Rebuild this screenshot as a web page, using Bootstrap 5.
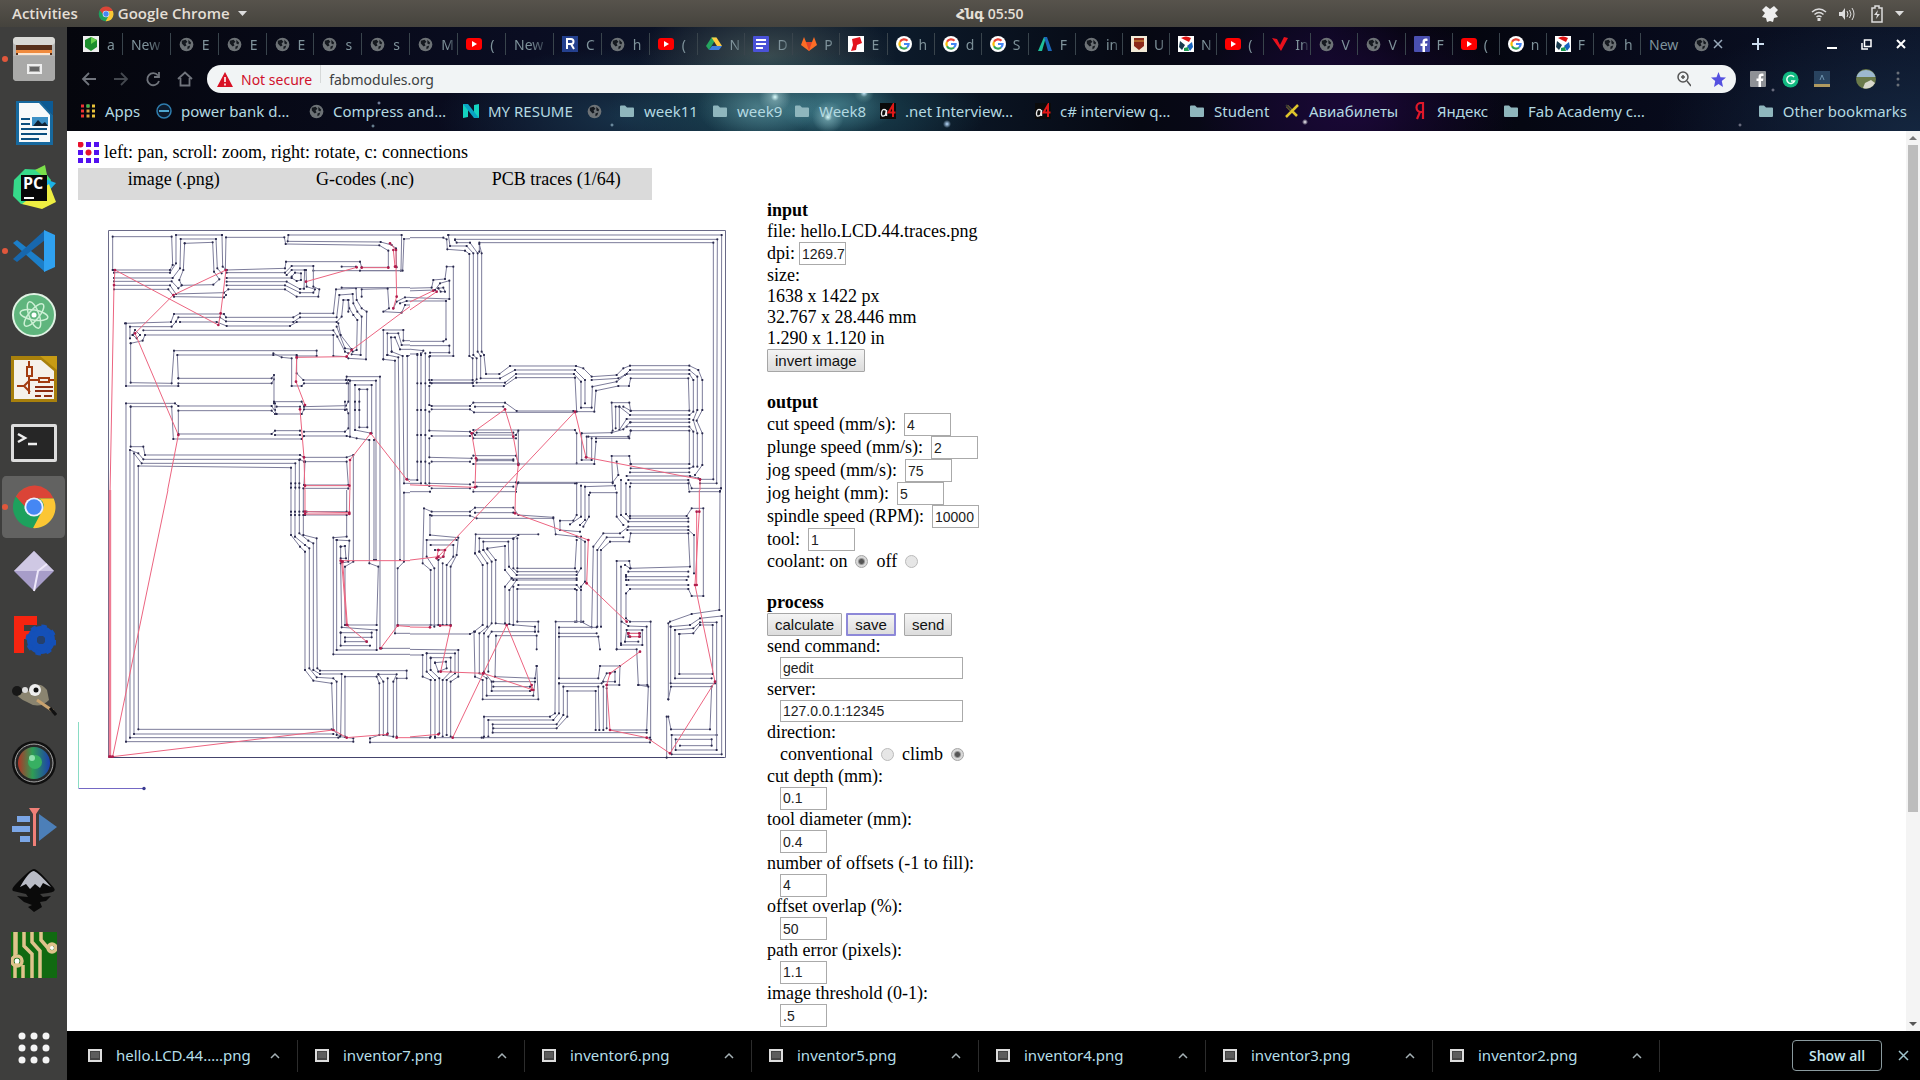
<!DOCTYPE html>
<html lang="en">
<head>
<meta charset="utf-8">
<meta name="viewport" content="width=device-width, initial-scale=1">
<title>fabmodules.org</title>
<link href="https://cdn.jsdelivr.net/npm/bootstrap@5.3.0/dist/css/bootstrap.min.css" rel="stylesheet">
<style>
  :root { --ui: "Noto Sans", "Open Sans", "DejaVu Sans", sans-serif; --page: "Liberation Serif", serif; }
  body { font-family: var(--ui); background: #000; color: #000; overflow: hidden; }
  a { text-decoration: none; color: inherit; }
  svg { display: block; flex: none; }
  .topbar { height: 27px; background: linear-gradient(#57534c, #45433d); color: #e4dfd6; font: 600 15px/27px "Open Sans", "DejaVu Sans", sans-serif; }
  .topbar button, .plain { background: none; border: 0; padding: 0; color: inherit; font: inherit; }
  .topbar time { font-size: 14px; }
  .topbar .side { flex: 954 1 0; }
  .topbar .side-end { flex-grow: 886; }
  .dock { width: 67px; background: #3e3e3d; flex: none; }
  .dock button { width: 67px; height: 64px; background: none; border: 0; padding: 0; display: flex; align-items: center; justify-content: center; position: relative; }
  .dock .running::before { content: ""; position: absolute; left: 2px; width: 6px; height: 6px; border-radius: 50%; background: #e0573c; }
  .dock .current { background: #626261 content-box; padding: 1px 2px; border-radius: 6px; }
  .chrome-top { color: #a9cdd6;
    background:
      radial-gradient(circle at 708px 70px, #dff 0, #8bb5bb99 4px, transparent 16px),
      radial-gradient(circle at 761px 90px, #dff 0, #7fb0b899 4px, transparent 16px),
      radial-gradient(circle at 797px 66px, #cef 0, #7aa6 4px, transparent 10px),
      radial-gradient(circle at 880px 97px, #bdf 0, transparent 4px),
      radial-gradient(circle at 312px 76px, #abd 0, transparent 2px),
      radial-gradient(circle at 306px 99px, #9bc 0, transparent 2px),
      radial-gradient(circle at 545px 98px, #9bc 0, transparent 2px),
      radial-gradient(circle at 1238px 95px, #fff 0, transparent 3px),
      radial-gradient(circle at 1673px 98px, #99a 0, transparent 2px),
      radial-gradient(circle at 1706px 63px, #99a 0, transparent 2px),
      radial-gradient(ellipse 60px 34px at 690px 80px, #5b8f98aa 0, transparent 100%),
      radial-gradient(ellipse 60px 30px at 770px 78px, #4c8894aa 0, transparent 100%),
      radial-gradient(ellipse 190px 60px at 730px 84px, #2a6070 0, #1b4654aa 45%, transparent 100%),
      radial-gradient(ellipse 130px 60px at 700px 30px, #3c4c50 0, transparent 100%),
      radial-gradient(ellipse 190px 70px at 560px 90px, #173148 0, transparent 100%),
      radial-gradient(ellipse 160px 110px at 1290px 80px, #1b0838 0, transparent 100%),
      radial-gradient(ellipse 260px 120px at 1853px 104px, #14263f 0, transparent 100%),
      linear-gradient(90deg, #05060d 0, #0a0d22 25%, #0c1a2a 45%, #060812 58%, #0c0820 68%, #03040a 72%, #070a1a 85%, #0c1428 100%); }
  .tabs { height: 38px; padding: 0 6px 4px 8px; font-size: 14px; color: #7f939b; }
  .tabs .tab { height: 22px; flex: 48 1 0; min-width: 0; overflow: hidden; display: flex; align-items: center; gap: 8px; padding-left: 8px; border-right: 1px solid #39444c; white-space: nowrap; }
  .tabs .tab.slim { flex-grow: 47; gap: 7px; }
  .tabs .tab span { overflow: hidden; flex: 1; padding-right: 3px; -webkit-mask-image: linear-gradient(90deg, #000 40%, transparent); }
  .tabs-end { width: 273px; flex: none; }
  .tabs-end button { height: 32px; }
  .toolbar { height: 28px; padding: 0 6px; color: #70747c; }
  .toolbar .tool { width: 32px; height: 28px; display: flex; align-items: center; justify-content: center; }
  .omnibox { height: 28px; border-radius: 14px; background: #f1f4f5; font-size: 14px; margin: 0 6px; padding: 0 10px; color: #d0112b; }
  .omnibox input { border: 0; background: none; color: #3c3f42; outline: 0; padding: 0; min-width: 0; }
  .omnibox .vr { height: 18px; color: #888; }
  .bookmarks { height: 38px; font-size: 15px; display: grid; padding: 0 13px 2px; align-items: center;
    grid-template-columns: 76px 153px 154px 124px 32px 93px 82px 86px 155px 154px 96px 127px 91px 1fr auto; }
  .bookmarks a { display: flex; align-items: center; gap: 9px; white-space: nowrap; color: #b3d9e1; }
  .viewport { background: #fff; font: 18px/21px var(--page); overflow: hidden; }
  .page { padding: 11px 0 0 11px; min-width: 0; overflow: hidden; }
  .page-head { height: 26px; gap: 5px; }
  .formats { width: 574px; height: 32px; background: #dadada; line-height: 22px; }
  .formats a { flex: 1 1 0; text-align: center; }
  .board { width: 689px; }
  .panel b { display: block; height: 21px; }
  .line { height: 21px; display: flex; align-items: center; gap: 8px; white-space: nowrap; }
  .line.entry { height: 23px; }
  .line.inset { padding-left: 13px; }
  .line.low { height: 22px; }
  .panel form > .gap-line { height: 20px; }
  .panel input[type=text] { width: 47px; height: 23px; border: 1px solid #aaa; padding: 0 0 0 2px; font: 14px/18px "Liberation Sans", sans-serif; color: #222; border-radius: 0; }
  .panel input[type=text].wide { width: 183px; height: 22px; }
  .panel button { height: 23px; border: 1px solid #a6a6a6; border-radius: 1px; background: linear-gradient(#f4f4f4, #dcdcdc); font: 15px/19px "Liberation Sans", sans-serif; padding: 0 7px; color: #111; }
  .panel button.focused { border: 2px solid #8d88d8; padding: 0 7px; }
  .panel input[type=radio] { appearance: none; width: 13px; height: 13px; margin: 0; border: 1px solid #bbb; border-radius: 50%; background: #e6e6e6; }
  .panel input[type=radio]:checked { background: radial-gradient(circle, #555 0 2px, #d8d8d8 4px); border-color: #a4a4a4; }
  .scroll { width: 14px; background: #f4f4f4; flex: none; }
  .scroll .thumb { width: 10px; flex: 667 1 0; background: #bdbdbd; }
  .scroll .rest { flex: 205 1 0; }
  .scroll svg { margin: 4px 0; }
  .downloads { height: 49px; background: #000; color: #b5dfe8; font-size: 15px; padding-left: 4px; padding-right: 11px; }
  .downloads .item { flex: 0 1 227px; height: 32px; border-right: 1px solid #2c2c2c; padding: 0 17px 0 16px; gap: 13px; white-space: nowrap; }
  .show-all { width: 90px; height: 31px; border: 1px solid #8a9a9e; border-radius: 4px; background: #000; color: #c4e8f0; font: 600 14px "Open Sans", sans-serif; }
  .board path { fill: none; stroke-width: 1; vector-effect: non-scaling-stroke; }
  .cut path { stroke: #7c7c9a; marker-start: url(#node); marker-mid: url(#node); marker-end: url(#node); }
  .jog path { stroke: #ec6480; marker-start: url(#hop); marker-mid: url(#hop); marker-end: url(#hop); }
</style>
<script src="https://cdn.jsdelivr.net/npm/bootstrap@5.3.0/dist/js/bootstrap.bundle.min.js"></script>
</head>
<body class="vh-100 d-flex flex-column">

<svg width="0" height="0" class="position-absolute" aria-hidden="true">
  <symbol id="globe" viewBox="0 0 16 16"><circle cx="8" cy="8" r="7.3" fill="#6d7276"/><path d="M3 4l4-1 2 2-2 2 1 2-2 1-3-3zM10 3l3 3-1 2-2-1zM9 10l3-1-1 3-2 1z" fill="#15191f"/></symbol>
  <symbol id="yt" viewBox="0 0 16 16"><rect y="2" width="16" height="12" rx="3" fill="#f00"/><path d="M6 5l5 3-5 3z" fill="#fff"/></symbol>
  <symbol id="goog" viewBox="0 0 16 16"><circle cx="8" cy="8" r="8" fill="#fff"/><g fill="none" stroke-width="2.2"><path d="M11.5 4.8A4.6 4.6 0 0 0 4 5.8" stroke="#ea4335"/><path d="M4 5.8a4.6 4.6 0 0 0 0 4.4" stroke="#fbbc05"/><path d="M4 10.2a4.6 4.6 0 0 0 7 1.3" stroke="#34a853"/><path d="M8 8h4.6a4.6 4.6 0 0 1-1.6 3.5" stroke="#4285f4"/></g></symbol>
  <symbol id="folder" viewBox="0 0 16 16"><path d="M1 3.500a1 1 0 0 1 1-1h4l2 2h6a1 1 0 0 1 1 1V13a1 1 0 0 1-1 1H2a1 1 0 0 1-1-1z" fill="#8fb6bd"/></symbol>
  <symbol id="fb" viewBox="0 0 16 16"><rect width="16" height="16" rx="1" fill="currentColor"/><path d="M11 16V10h2l.4-2.500H11V6.200c0-.8.4-1.200 1.300-1.200h1.200V2.800C11 2.300 8.500 2.500 8.500 6v1.500h-2V10h2v6z" fill="#fff"/></symbol>
  <symbol id="mix" viewBox="0 0 16 16"><rect width="16" height="16" fill="#fff"/><path d="M3 2q5-3 10 0l-2 4-4-2z" fill="#d11"/><path d="M2 5l5 4-3 5-3-3z" fill="#173a4e"/><path d="M14 6l-5 4 3 5 3-4z" fill="#1764c0"/><path d="M6 12l4-1 1 4H6z" fill="#1a9a50"/></symbol>
  <symbol id="a4" viewBox="0 0 16 16"><rect width="16" height="16" fill="#0b0b0b"/><path d="M6 7Q2 5 1.500 10t4 2l1-5v6" stroke="#eee" stroke-width="1.400" fill="none"/><path d="M13 14V2L8.500 9.500H15.500" stroke="#e01818" stroke-width="2" fill="none"/></symbol>
  <symbol id="thumb" viewBox="0 0 16 16"><rect x="1" y="1" width="14" height="13" fill="#ddd"/><rect x="3" y="3" width="10" height="9" fill="#444"/><path d="M4 5h8M4 7h8M4 9h8" stroke="#777"/></symbol>
  <symbol id="up" viewBox="0 0 10 10"><path d="M1 7l4-4 4 4" fill="none" stroke="#a5b1b5" stroke-width="1.500"/></symbol>
  <symbol id="chrome" viewBox="0 0 48 48"><circle cx="24" cy="24" r="22" fill="#1da15d"/><path d="M5 13A22 22 0 0 1 44.500 15H24a9 9 0 0 0-9 9z" fill="#db4437"/><path d="M44.500 15A22 22 0 0 1 23 46l9-17a9 9 0 0 0-3-14z" fill="#fbc634"/><circle cx="24" cy="24" r="10" fill="#eef"/><circle cx="24" cy="24" r="8" fill="#4587f4"/></symbol>
</svg>

<header class="topbar d-flex align-items-center px-0">
  <div class="side d-flex align-items-center ps-2">
    <button class="ms-1">Activities</button>
    <button class="d-flex align-items-center ms-3 ps-1 gap-1"><svg width="16" height="16"><use href="#chrome"/></svg><span>Google Chrome</span><svg width="10" height="6" class="ms-1"><path d="M0 0h9l-4.500 5z" fill="#ddd"/></svg></button>
  </div>
  <time>Հնգ 05:50</time>
  <div class="side side-end d-flex align-items-center justify-content-end pe-3">
    <svg width="18" height="18" class="me-3" viewBox="0 0 18 18"><path d="M5 1l4 3 4-3 4 4-3 3 3 4-4 1-1 4-3-1-3 1-1-4-4-1 3-4-3-3z" fill="#eee"/></svg>
    <svg width="16" height="16" class="ms-3 me-2" viewBox="0 0 16 16" fill="none" stroke="#ddd" stroke-width="1.500"><path d="M1 6q7-6 14 0M3.500 8.500q4.500-4 9 0M5.500 11q2.500-2 5 0"/><path d="M8 12v3" stroke-width="3"/></svg>
    <svg width="16" height="14" class="ms-1 me-2" viewBox="0 0 16 14"><path d="M0 5h3l3-4v12l-3-4H0z" fill="#ddd"/><path d="M8 4q2 3 0 6M10.500 3q3 4 0 8M13 1q4 6 0 12" fill="none" stroke="#ddd"/></svg>
    <svg width="12" height="18" class="ms-2 me-2" viewBox="0 0 12 18"><path d="M4 1h4v2h3v14H1V3h3z" fill="none" stroke="#ddd" stroke-width="1.500"/><path d="M7 5l-4 5h3l-1 4 4-5H6z" fill="#ddd"/></svg>
    <svg width="9" height="6" class="ms-1"><path d="M0 0h9l-4.500 5z" fill="#ddd"/></svg>
  </div>
</header>

<div class="d-flex flex-grow-1" style="min-height:0">
  <nav class="dock d-flex flex-column" aria-label="Dock">
    <button class="running" aria-label="Files"><svg width="44" height="46" viewBox="0 0 44 46"><rect x="1" y="1" width="42" height="44" rx="4" fill="#b4b4b2"/><rect x="1" y="1" width="42" height="8" rx="4" fill="#d9d9d6"/><rect x="4" y="9" width="36" height="10" fill="#57301c"/><path d="M4 14h36v3H4z" fill="#f08a3c"/><path d="M6 17h32v2H6z" fill="#fbe5d0"/><path d="M1 20h42v21a4 4 0 0 1-4 4H5a4 4 0 0 1-4-4z" fill="#a9a9a8"/><rect x="16" y="29" width="13" height="8" fill="none" stroke="#eee" stroke-width="2"/><rect x="18" y="31" width="9" height="4" fill="#666"/></svg></button>
    <button aria-label="Writer"><svg width="40" height="46" viewBox="0 0 40 46"><path d="M2 1h24l13 14v30H2z" fill="#17699f"/><path d="M5 3h20l11 12v27H5z" fill="#f7f9fa"/><path d="M26 1h13v14z" fill="#0c5a94"/><path d="M7 19h9M7 24h9M7 29h26M7 34h26M7 39h18" stroke="#0b4f80" stroke-width="2"/><rect x="18" y="17" width="16" height="9" fill="#3c90c6"/><path d="M19 26l5-6 4 4 3-2 3 4z" fill="#123"/></svg></button>
    <button aria-label="PyCharm"><svg width="46" height="46" viewBox="0 0 46 46"><path d="M3 16L14 5l18 1 8 10-8 26-22-2-8-8z" fill="#36d98a"/><path d="M24 6l10-5 3 15z" fill="#7be04a"/><path d="M34 15l11 4-8 9z" fill="#1bb3e6"/><path d="M38 20l7 18-14 7-20-5z" fill="#eeee42"/><rect x="10" y="11" width="26" height="26" fill="#080808"/><path d="M13 34h10" stroke="#fff" stroke-width="2"/><text x="12" y="25" font-family="Open Sans, sans-serif" font-size="16" font-weight="700" fill="#fff">PC</text></svg></button>
    <button class="running" aria-label="Visual Studio Code"><svg width="44" height="44" viewBox="0 0 44 44"><path d="M1 14l4-3 28 22v10z" fill="#1c7fc9"/><path d="M1 30l4 3L33 11V1z" fill="#1767ad"/><path d="M32 1l11 5v32l-11 5z" fill="#2fa1f0"/></svg></button>
    <button aria-label="Atom"><svg width="44" height="44" viewBox="0 0 44 44"><circle cx="22" cy="22" r="21" fill="#5fb57d" stroke="#dff2e3" stroke-width="2"/><g fill="none" stroke="#cdf0d5" stroke-width="1.500"><ellipse cx="22" cy="22" rx="14" ry="5" transform="rotate(10 22 22)"/><ellipse cx="22" cy="22" rx="14" ry="5" transform="rotate(70 22 22)"/><ellipse cx="22" cy="22" rx="14" ry="5" transform="rotate(130 22 22)"/></g><circle cx="22" cy="22" r="2.500" fill="#fff"/></svg></button>
    <button aria-label="Eeschema"><svg width="48" height="48" viewBox="0 0 48 48"><path d="M1 1h33l13 13v33H1z" fill="#a8800c"/><path d="M4 5h27l13 11v28H4z" fill="#f5f1ea"/><path d="M30 1h17v14z" fill="#c79b14"/><g fill="none" stroke="#a33c10" stroke-width="2"><path d="M19 6v6m0 8v5m0 0v14M7 31h8m4-5l-5 5 6 6M20 25h9m10 0h5"/><rect x="17" y="12" width="5" height="9"/><rect x="29" y="23" width="10" height="4"/></g><path d="M25 32h18M25 36h18M25 41h6M34 41h8" stroke="#8c2c10" stroke-width="2"/></svg></button>
    <button aria-label="Terminal"><svg width="46" height="38" viewBox="0 0 46 38"><rect width="46" height="38" rx="2" fill="#ddd"/><rect x="3" y="3" width="40" height="32" fill="#262626"/><path d="M7 10l7 4-7 4M17 20h9" fill="none" stroke="#eee" stroke-width="2.500"/></svg></button>
    <button class="running current" aria-label="Google Chrome"><svg width="46" height="46"><use href="#chrome"/></svg></button>
    <button aria-label="3D viewer"><svg width="42" height="42" viewBox="0 0 42 42"><path d="M21 1l20 20-20 20L1 21z" fill="#a79dc9"/><path d="M21 1l20 20H25L1 21z" fill="#cfc8e4"/><path d="M21 41l4-20 9-7" fill="none" stroke="#eee8fa" stroke-width="2"/></svg></button>
    <button aria-label="FreeCAD"><svg width="44" height="42" viewBox="0 0 44 42"><path d="M2 2h23v9H12v6h11v8H12v14H2z" fill="#f62410"/><g transform="translate(29 26)"><circle r="9" fill="none" stroke="#1450b8" stroke-width="10"/><circle r="13" fill="none" stroke="#1450b8" stroke-width="5" stroke-dasharray="5 5.200"/><circle r="4" fill="#24406e"/></g></svg></button>
    <button aria-label="GIMP"><svg width="46" height="34" viewBox="0 0 46 34"><path d="M3 8q8 6 17-1Q28-2 36 8l2 10q-10 10-22 2Q6 16 3 8z" fill="#8a8470"/><circle cx="6" cy="9" r="5" fill="#171717"/><circle cx="24" cy="8" r="6" fill="#eee"/><circle cx="25" cy="8" r="2.500" fill="#111"/><circle cx="14" cy="8" r="3" fill="#ddd"/><path d="M26 18l16 11" stroke="#c9a26e" stroke-width="3"/><path d="M39 26l6 7" stroke="#111" stroke-width="3"/></svg></button>
    <button aria-label="Camera"><svg width="46" height="46" viewBox="0 0 46 46"><defs><linearGradient id="lens"><stop stop-color="#b23427"/><stop offset=".45" stop-color="#2e9c55"/><stop offset="1" stop-color="#1c3fae"/></linearGradient></defs><circle cx="23" cy="23" r="22" fill="#101010"/><circle cx="23" cy="23" r="19" fill="#262626" stroke="#aaa"/><circle cx="23" cy="23" r="16" fill="url(#lens)"/><circle cx="24" cy="22" r="7" fill="#37b062"/><circle cx="21" cy="18" r="3" fill="#8fe0ad"/></svg></button>
    <button aria-label="Kdenlive"><svg width="46" height="40" viewBox="0 0 46 40"><path d="M6 9h13v6H6zM1 19h18v6H1zM9 29h10v6H9z" fill="#7ba6e6"/><path d="M28 7l18 13-18 14z" fill="#4c7fb8"/><path d="M18 1h11l-4 6v32h-3V7z" fill="#f08078"/></svg></button>
    <button aria-label="Inkscape"><svg width="46" height="46" viewBox="0 0 46 46"><path d="M23 1q4 0 20 19 3 4-6 5l-8 1 3 3 8-1-5 5-6 1 2 5-8 5-6-5 4-2-8-3-7-6 11 1-2-3L2 23q-2-2 2-6Q19 1 23 1z" fill="#0a0a0a"/><path d="M23 3q5 2 17 16l-8-4-3 5-5-4-5 5-4-5-6 3Q18 3 23 3z" fill="#b9bcc6"/></svg></button>
    <button aria-label="Pcbnew"><svg width="46" height="46" viewBox="0 0 46 46"><rect width="46" height="46" fill="#116a11"/><g fill="none" stroke="#dfc38c" stroke-width="3.500"><path d="M4 0v24M4 46V34l3-4M12 46V33M5 0v22M13 0v14l8 8v24M21 0v10l8 9v27M30 0v8l6 7h6"/><circle cx="6" cy="29" r="5"/><circle cx="41" cy="16" r="4"/></g><circle cx="6" cy="29" r="2.500" fill="#fff"/><circle cx="41" cy="16" r="2" fill="#fff"/></svg></button>
    <button class="mt-auto" aria-label="Show applications"><svg width="32" height="32" viewBox="0 0 32 32" fill="#f4f4f4"><circle cx="4" cy="4" r="3.500"/><circle cx="16" cy="4" r="3.500"/><circle cx="28" cy="4" r="3.500"/><circle cx="4" cy="16" r="3.500"/><circle cx="16" cy="16" r="3.500"/><circle cx="28" cy="16" r="3.500"/><circle cx="4" cy="28" r="3.500"/><circle cx="16" cy="28" r="3.500"/><circle cx="28" cy="28" r="3.500"/></svg></button>
  </nav>

  <div class="d-flex flex-column flex-grow-1" style="min-width:0">
    <div class="chrome-top">
      <div class="tabs d-flex align-items-center">
        <a href="#" class="tab"><svg width="16" height="16"><rect width="16" height="16" fill="#eee"/><path d="M8 1l6 3v7l-6 4-6-4V4z" fill="#1d8f2d"/><path d="M8 1l6 3-6 4z" fill="#6ad24e"/></svg><span>a</span></a>
        <a href="#" class="tab"><span>New</span></a>
        <a href="#" class="tab"><svg width="15" height="15"><use href="#globe"/></svg><span>E</span></a>
        <a href="#" class="tab"><svg width="15" height="15"><use href="#globe"/></svg><span>E</span></a>
        <a href="#" class="tab"><svg width="15" height="15"><use href="#globe"/></svg><span>E</span></a>
        <a href="#" class="tab"><svg width="15" height="15"><use href="#globe"/></svg><span>s</span></a>
        <a href="#" class="tab"><svg width="15" height="15"><use href="#globe"/></svg><span>s</span></a>
        <a href="#" class="tab"><svg width="15" height="15"><use href="#globe"/></svg><span>M</span></a>
        <a href="#" class="tab"><svg width="16" height="16"><use href="#yt"/></svg><span>(</span></a>
        <a href="#" class="tab"><span>New</span></a>
        <a href="#" class="tab"><svg width="16" height="16"><rect width="16" height="16" fill="#24408e"/><path d="M5 13V3h4a2.500 2.500 0 0 1 0 5H5m4 0l3 5" fill="none" stroke="#fff" stroke-width="2"/></svg><span>C</span></a>
        <a href="#" class="tab"><svg width="15" height="15"><use href="#globe"/></svg><span>h</span></a>
        <a href="#" class="tab"><svg width="16" height="16"><use href="#yt"/></svg><span>(</span></a>
        <a href="#" class="tab"><svg width="16" height="16"><path d="M5.500 1.500h5L8 6 3 14 0 10z" fill="#25a55f"/><path d="M5.500 1.500h5L16 10h-5z" fill="#fc4"/><path d="M3 14l3-4h10l-3 4z" fill="#3c7de0"/></svg><span>N</span></a>
        <a href="#" class="tab"><svg width="16" height="16"><rect width="16" height="16" rx="1" fill="#4a52d8"/><path d="M3 4h10M3 8h10M3 12h7" stroke="#fff" stroke-width="2"/></svg><span>D</span></a>
        <a href="#" class="tab slim"><svg width="16" height="16"><path d="M0 9L3 1l2 5h6l2-5 3 8-8 6z" fill="#fc6d26"/><path d="M5 6h6l-3 9z" fill="#e24329"/></svg><span>P</span></a>
        <a href="#" class="tab slim"><svg width="16" height="16"><rect width="16" height="16" fill="#fff"/><path d="M4 3l8-2 2 6-5 2-1 5-5 1 2-6z" fill="#e3131c"/></svg><span>E</span></a>
        <a href="#" class="tab slim"><svg width="16" height="16"><use href="#goog"/></svg><span>h</span></a>
        <a href="#" class="tab slim"><svg width="16" height="16"><use href="#goog"/></svg><span>d</span></a>
        <a href="#" class="tab slim"><svg width="16" height="16"><use href="#goog"/></svg><span>S</span></a>
        <a href="#" class="tab slim"><svg width="16" height="16"><path d="M1 15L7 1h2L5 15z" fill="#1fc09a"/><path d="M7 1h3l5 14h-4z" fill="#1b66b8"/></svg><span>F</span></a>
        <a href="#" class="tab slim"><svg width="15" height="15"><use href="#globe"/></svg><span>in</span></a>
        <a href="#" class="tab slim"><svg width="16" height="16"><rect width="16" height="16" fill="#f3ead6"/><path d="M3 2h10v8l-5 4-5-4z" fill="#8c2a1a"/><path d="M3 5h10" stroke="#d9a441"/></svg><span>U</span></a>
        <a href="#" class="tab slim"><svg width="16" height="16"><use href="#mix"/></svg><span>N</span></a>
        <a href="#" class="tab slim"><svg width="16" height="16"><use href="#yt"/></svg><span>(</span></a>
        <a href="#" class="tab slim"><svg width="16" height="16"><path d="M0 2l5 1 3 6 4-8 4 1-7 13z" fill="#e8101c"/></svg><span>In</span></a>
        <a href="#" class="tab slim"><svg width="15" height="15"><use href="#globe"/></svg><span>V</span></a>
        <a href="#" class="tab slim"><svg width="15" height="15"><use href="#globe"/></svg><span>V</span></a>
        <a href="#" class="tab slim"><svg width="16" height="16" color="#4a4fb0"><use href="#fb"/></svg><span>F</span></a>
        <a href="#" class="tab slim"><svg width="16" height="16"><use href="#yt"/></svg><span>(</span></a>
        <a href="#" class="tab slim"><svg width="16" height="16"><use href="#goog"/></svg><span>n</span></a>
        <a href="#" class="tab slim"><svg width="16" height="16"><use href="#mix"/></svg><span>F</span></a>
        <a href="#" class="tab slim"><svg width="15" height="15"><use href="#globe"/></svg><span>h</span></a>
        <div class="tabs-end d-flex align-items-center">
          <a href="#" class="ps-2 me-2">New</a>
          <svg width="15" height="15" class="ms-2"><use href="#globe"/></svg>
          <button class="plain ms-1" aria-label="Close tab"><svg width="10" height="10"><path d="M1 1l8 8M9 1L1 9" stroke="#9ab" stroke-width="1.500"/></svg></button>
          <button class="plain ms-4 ps-1" aria-label="New tab"><svg width="14" height="14"><path d="M7 1v12M1 7h12" stroke="#cde" stroke-width="2"/></svg></button>
          <div class="ms-auto d-flex align-items-center gap-4 pe-2">
            <button class="plain" aria-label="Minimize"><svg width="10" height="12"><path d="M0 10h10" stroke="#fff" stroke-width="2"/></svg></button>
            <button class="plain" aria-label="Restore"><svg width="11" height="11"><path d="M3.500 1h6.500v6.500H3.500zM1 4v6h6" fill="none" stroke="#fff" stroke-width="1.500"/></svg></button>
            <button class="plain" aria-label="Close"><svg width="10" height="10"><path d="M1 1l8 8M9 1L1 9" stroke="#fff" stroke-width="2"/></svg></button>
          </div>
        </div>
      </div>

      <div class="toolbar d-flex align-items-center">
        <button class="plain tool" aria-label="Back"><svg width="16" height="16" fill="none" stroke="currentColor" stroke-width="1.800"><path d="M15 8H2M8 2L2 8l6 6"/></svg></button>
        <button class="plain tool" aria-label="Forward"><svg width="16" height="16" fill="none" stroke="#44484f" stroke-width="1.800"><path d="M1 8h13M8 2l6 6-6 6"/></svg></button>
        <button class="plain tool" aria-label="Reload"><svg width="16" height="16" fill="none" stroke="currentColor" stroke-width="1.800"><path d="M13 4.500A6 6 0 1 0 14 10M14 1v5H9"/></svg></button>
        <button class="plain tool" aria-label="Home"><svg width="16" height="16" fill="none" stroke="currentColor" stroke-width="1.800"><path d="M1 8l7-6.500L15 8M3.500 7v7.500h9V7"/></svg></button>
        <div class="omnibox d-flex align-items-center flex-grow-1">
          <svg width="16" height="15" class="me-2"><path d="M8 0l8 15H0z" fill="#d81125"/><path d="M8 5v5M8 11.500v2" stroke="#fff" stroke-width="1.600"/></svg>
          <label for="url">Not secure</label><span class="vr mx-2"></span>
          <input id="url" type="text" class="flex-grow-1" value="fabmodules.org">
          <button class="plain me-3 pe-1" aria-label="Zoom"><svg width="14" height="16" fill="none" stroke="#555" stroke-width="1.500"><circle cx="6" cy="6" r="5"/><path d="M10 10l4 5M4 6h4M6 4v4"/></svg></button>
          <button class="plain" aria-label="Bookmark this page"><svg width="15" height="15"><path d="M7.500 0l2 5.200 5.500.3-4.200 3.500L12 15l-4.500-3L3 15l1.200-6L0 5.500l5.500-.3z" fill="#5450e0"/></svg></button>
        </div>
        <button class="plain tool" aria-label="Facebook"><svg width="16" height="16" color="#8e9196"><use href="#fb"/></svg></button>
        <button class="plain tool" aria-label="Grammarly"><svg width="17" height="17"><circle cx="8.500" cy="8.500" r="8" fill="#12b981"/><path d="M12 6a4 4 0 1 0 .5 4H9" fill="none" stroke="#eafff6" stroke-width="1.500"/></svg></button>
        <button class="plain tool me-2" aria-label="Extension"><svg width="16" height="16"><rect width="16" height="13" fill="#29435f"/><path d="M0 14.500h16" stroke="#b09a60" stroke-width="3"/><path d="M6 9l2-5 2 5" fill="none" stroke="#6d92ad"/></svg></button>
        <button class="plain tool ms-1" aria-label="Profile"><svg width="20" height="20"><circle cx="10" cy="10" r="10" fill="#6a7a4a"/><path d="M0.500 8A10 10 0 0 1 19.500 8z" fill="#9db9cf"/><path d="M9 14l6-3 4 3a10 10 0 0 1-12 5z" fill="#d8d8cc"/></svg></button>
        <button class="plain tool" aria-label="Menu"><svg width="4" height="16" fill="#6a7078"><circle cx="2" cy="2" r="1.500"/><circle cx="2" cy="8" r="1.500"/><circle cx="2" cy="14" r="1.500"/></svg></button>
      </div>

      <nav class="bookmarks">
        <a href="#"><svg width="16" height="16" viewBox="0 0 16 16"><path d="M1 3h3M1 8h3M1 13h3" stroke="#e33" stroke-width="3"/><path d="M6.500 3h3M6.500 8h3M6.500 13h3" stroke="#d9a03a" stroke-width="3"/><path d="M12 3h3M12 8h3M12 13h3" stroke="#e8c23a" stroke-width="3"/><path d="M6.500 3h3" stroke="#3b5" stroke-width="3"/></svg>Apps</a>
        <a href="#"><svg width="16" height="16"><circle cx="8" cy="8" r="7" fill="#0d1a2c" stroke="#2f7dae" stroke-width="1.500"/><path d="M3 8h10" stroke="#4fa6d0" stroke-width="2"/></svg>power bank d…</a>
        <a href="#"><svg width="15" height="15"><use href="#globe"/></svg>Compress and…</a>
        <a href="#"><svg width="16" height="16"><path d="M0 1l5 1v12l-5 1z" fill="#14d3c0"/><path d="M16 1l-5 1v12l5 1z" fill="#14d3c0"/><path d="M0 1h5l11 14h-5z" fill="#0aa4c4"/></svg>MY RESUME</a>
        <a href="#" aria-label="Bookmark"><svg width="15" height="15"><use href="#globe"/></svg></a>
        <a href="#"><svg width="16" height="16"><use href="#folder"/></svg>week11</a>
        <a href="#"><svg width="16" height="16"><use href="#folder"/></svg>week9</a>
        <a href="#"><svg width="16" height="16"><use href="#folder"/></svg>Week8</a>
        <a href="#"><svg width="16" height="16"><use href="#a4"/></svg>.net Interview…</a>
        <a href="#"><svg width="16" height="16"><use href="#a4"/></svg>c# interview q…</a>
        <a href="#"><svg width="16" height="16"><use href="#folder"/></svg>Student</a>
        <a href="#"><svg width="15" height="16"><path d="M1 14L13 2M2 3l10 10" stroke="#dfc52c" stroke-width="2.500"/><path d="M1 2l5 5" stroke="#333" stroke-width="2"/></svg>Авиабилеты</a>
        <a href="#"><svg width="16" height="18"><path d="M11 17V1H9a4 4 0 0 0 0 9h2M8 10l-3 7" fill="none" stroke="#e0182a" stroke-width="2.200"/></svg>Яндекс</a>
        <a href="#"><svg width="16" height="16"><use href="#folder"/></svg>Fab Academy c…</a>
        <a href="#"><svg width="16" height="16"><use href="#folder"/></svg>Other bookmarks</a>
      </nav>
    </div>

    <main class="viewport d-flex flex-grow-1" style="min-height:0">
      <div class="page flex-grow-1">
        <div class="page-head d-flex">
          <svg width="21" height="21" viewBox="0 0 21 21" fill="#5310f0"><circle cx="2.500" cy="2.500" r="3" fill="#e8102c"/><path d="M8 0h5v5H8zM16 0h5v5h-5zM0 8h5v5H0zM16 8h5v5h-5zM0 16h5v5H0zM8 16h5v5H8zM16 16h5v5h-5z"/><circle cx="10.500" cy="10.500" r="3" fill="#e8102c"/></svg>
          <span>left: pan, scroll: zoom, right: rotate, c: connections</span>
        </div>
        <div class="formats d-flex"><a href="#">image (.png)</a><a href="#">G-codes (.nc)</a><a href="#">PCB traces (1/64)</a></div>
        <div class="d-flex">
          <svg class="board" viewBox="78 200 689 620" height="620" overflow="visible" role="img" aria-label="Tool path preview">
            <defs>
              <marker id="node" markerUnits="userSpaceOnUse" markerWidth="8" markerHeight="8" refX="4" refY="4"><circle cx="4" cy="4" r="3.200" fill="#2a2a4e"/></marker>
              <marker id="hop" markerUnits="userSpaceOnUse" markerWidth="10" markerHeight="10" refX="5" refY="5"><circle cx="5" cy="5" r="4" fill="#b01c4c"/></marker>
              <clipPath id="nw"><path d="M0 0H930V810H0Z"/></clipPath><clipPath id="ne"><path d="M0 0H980V810H0Z"/></clipPath>
              <clipPath id="sw"><path d="M0 0H930V830H0Z"/></clipPath><clipPath id="se"><path d="M0 0H980V830H0Z"/></clipPath>
            </defs>
            <path d="M108.500 230.500H725.500V757.500H108.500Z" stroke="#6a6a88"/>
            <path d="M110 757.500H724" stroke="#44446c"/>
            <path d="M78.500 722V788" stroke="#8adcc4"/><path d="M78.500 788.500H145" stroke="#7468c4"/><circle cx="144" cy="788.500" r="1.700" fill="#3a3a90"/>
            <g transform="translate(100 220) scale(.33333)" clip-path="url(#nw)">
              <g class="cut">
                <path d="M38 150V50H215L218 135 210 150H42"/><path d="M366 45H228V130L210 158H42M366 45L368 140 380 150"/>
                <path d="M42 174H218L240 145 242 57H348L352 145 365 160"/><path d="M254 70L338 67 342 155 358 178 340 194 245 196 238 180 250 150Z"/>
                <path d="M376 150L378 52H553L557 72 838 76 865 92V142H785L780 125H558L555 145 380 150"/>
                <path d="M640 152H903L905 45H565L563 64 842 66 875 75 888 85 890 142"/><path d="M960 55L912 57 908 152H780M725 140H768"/>
                <path d="M42 184H215L235 205 245 196"/><path d="M42 196H210L228 222 372 218 385 208H555L590 230H655L658 208 640 200V138H575L555 158H380"/>
                <path d="M42 208H205L222 230 372 232 378 225"/><path d="M380 196H555L600 218H640L645 208 620 200 618 150"/>
                <path d="M380 185H560L600 207 612 206 614 150H575L560 165"/><path d="M380 174H575L590 183 603 180V160L585 158 575 170"/>
                <path d="M75 310L213 306 222 282H372L378 292H580L600 280H700L708 208 768 205 770 240 785 265 800 275 798 418 745 415"/>
                <path d="M90 355V320H215L228 305 235 292H360L378 304 580 306 600 292H710L718 225 758 222 760 250 772 275 785 290 782 405 755 403"/>
                <path d="M240 306H350L380 318H570L590 306H710L725 290 730 240H745L748 265 760 285 772 300 770 390 758 395"/>
                <path d="M745 240V275"/><path d="M715 310L722 345 755 388M710 320L735 385 755 388"/>
                <path d="M92 370L128 362 135 345H700V408L740 410"/><path d="M130 331H700L712 350 735 395 745 400"/><path d="M98 345L105 330 120 345 110 355Z"/>
                <path d="M78 310V498H235V490H515L522 478"/><path d="M92 370V488L215 490 222 392H650V408H590"/>
                <path d="M235 475L232 405H520L590 405"/><path d="M520 400L545 412 575 415V498H605L612 490H740L745 480"/><path d="M235 475H515L522 465V550"/>
                <path d="M590 415V460L610 480H738L740 470H840V825"/><path d="M522 545H605L612 560 738 557 745 545V490"/><path d="M530 560H600M525 550V570"/>
                <path d="M78 825V550H225L235 558H515L530 582H605L612 568H740L745 580V625L735 635H612"/>
                <path d="M92 560V680H130L135 705H600L612 712H740L760 705V825"/><path d="M92 560H215L220 657H605L612 648H740L770 655 808 660V825"/>
                <path d="M525 582L515 572H235V642H515L525 632H600"/><path d="M525 645H600"/>
                <path d="M750 482H828V825"/><path d="M765 495H815V640L765 630Z"/><path d="M778 508H802V622H778Z"/><path d="M750 482V650M822 660V825"/>
                <path d="M90 825V690L115 700 130 718H600L612 725"/><path d="M102 825V700L125 730H586V825"/><path d="M115 825V738L573 743V825"/><path d="M598 720V825"/><path d="M573 790V803M586 790V803M598 790V803"/>
                <path d="M615 725H740L745 795H612Z"/><path d="M610 825V805H745L740 825"/>
                <path d="M850 418V330H910V362H960"/><path d="M862 405V340H895L905 375H960"/><path d="M875 395L873 352H885L900 388H960"/>
                <path d="M850 418L885 422V825"/><path d="M862 405L895 412 900 825"/><path d="M875 395L908 408 912 790H960"/><path d="M922 408L948 402V778H922Z"/>
                <path d="M735 545V570M765 545V570M778 545V570"/>
                <path d="M725 203H945"/><path d="M785 230V208L863 206 867 265 850 275 905 278 915 255H945"/><path d="M880 265L890 245 915 232H945M900 250L920 243H945"/>
              </g>
              <g class="jog"><path d="M30 825L42 195 45 150 355 315 362 280 378 150 220 225 105 340 235 645 200 825"/><path d="M618 185L770 142M785 143H865M870 70L888 90V140L890 230 880 265M880 90L885 140"/><path d="M948 246L755 390 740 410 590 412 588 485 615 555M600 568L612 712 615 825M750 825V720L812 640 920 778 945 797M615 797H748"/></g>
            </g>
            <g transform="translate(410 220) scale(.33333)" clip-path="url(#ne)">
              <g class="cut">
                <path d="M-15 53H100L110 58 112 88 165 92 178 102V408L188 415V480H65"/><path d="M115 45L120 78H170L190 100V405L200 415V478L188 488H60"/>
                <path d="M115 45H935L933 805"/><path d="M135 58H922L920 790H870"/><path d="M135 60L140 68H180L203 100V395L212 408V475H270L315 450H495L525 480V550"/>
                <path d="M208 95V68H910V778H870"/><path d="M208 72L215 100V395L222 405 228 462H268L300 438H498L520 445 545 470 620 465 640 445 660 437H838L865 450 877 480V570L860 602 877 640V735L855 765"/>
                <path d="M200 488H285L318 462H492L513 485V563H545L547 500 620 485 645 465 660 450H838L862 470V570L850 600 862 640V740"/>
                <path d="M190 498H282L318 473H495L500 575H553L558 512 625 498H657L662 475H835L838 572H662L640 560"/>
                <path d="M545 480L625 475 650 462H838L850 480V575L838 585H660L628 560"/><path d="M608 632L605 548H658L662 573"/><path d="M617 625V560H628V630L650 597H838"/>
                <path d="M662 607H838"/><path d="M650 620H838L850 635V740L838 745H662"/><path d="M662 632H838V732H662"/><path d="M515 640L605 638 640 628 660 607"/><path d="M535 650H655M558 655H658L662 632"/>
                <path d="M190 630H495L500 640V730M318 655H190L185 640"/><path d="M190 640L195 645H318L325 632V732H553L558 665"/><path d="M515 640V720H545V655M530 650V712"/>
                <path d="M65 490H188M58 410V480M58 498V555L65 558H180L190 548H285L320 573H490"/><path d="M65 568H180L192 577H495"/><path d="M58 575V632L180 635M65 648H180M58 655V712L185 715M65 725H180M58 730V790L180 793M65 805H180"/>
                <path d="M195 560H280M200 638H310M200 718H310M200 722H310M200 800H310"/><path d="M190 707H318L325 730M190 732H325M190 787H318M190 812H318L323 790H495"/>
                <path d="M22 405V490 570 645 725 780H-15"/><path d="M33 400V490 570 645 725 790H-15"/><path d="M46 400V490 570 645 725 790L58 798"/>
                <path d="M-15 205L65 203 70 180 105 177 110 140H130V408H60"/><path d="M-15 213L75 210 90 190 118 182V237L-15 232"/><path d="M-15 243H108V358L100 364H-15"/><path d="M-15 377H118V398H60"/><path d="M-15 386L40 392 33 405M-15 402H22"/><path d="M85 205L100 203 105 215H92Z"/>
                <path d="M608 790L605 708H658L662 732"/><path d="M660 757H838M650 768H840L865 775 870 780"/><path d="M655 780H835L845 805H933"/><path d="M662 790H835L838 825"/>
                <path d="M325 787H608L625 765 620 725M500 825V790M513 825V797M525 825V800L615 797 620 825M633 780V825M648 790V825M660 800V825"/>
              </g>
              <g class="jog"><path d="M-15 280L80 215M-15 253L70 212"/><path d="M-15 794L195 802 198 715 185 640 285 568 310 650 325 735 315 825"/><path d="M259 825L495 575 528 712 870 778V825"/></g>
            </g>
            <g transform="translate(100 490) scale(.33333)" clip-path="url(#sw)">
              <g class="cut">
                <path d="M573-15V65 75 135L600 170 615 185V540L640 572 695 580 700 720 720 740 760 745V755H78V-15"/><path d="M90-15V743H715M102-15V732H700M115-15V718H695"/>
                <path d="M585-15V65 75 140L615 165 628 175V535L650 562 700 565 710 575V735"/><path d="M598-15V65 75 130L625 152 640 160V540L660 552H725L722 735"/><path d="M610-15V65M610 75V135L650 145 652 535 660 542H920V565H890V740"/>
                <path d="M620 65H740V-15M615 75H740V140L700 143V493H945"/><path d="M760-15V215L735 230V405H830L835 230 808 220V-15"/><path d="M710 150V480H830V420L725 412 722 220 745 215 748 152Z"/><path d="M722 170L735 168 738 205H722Z"/>
                <path d="M822-15V210M828-15V210M840-15V475M885-15V430H945"/><path d="M900-15V210M945 8H912V215L893 235V405H945"/><path d="M722 428H815V442H735V455H800M722 428V467H810"/><path d="M845 475H945"/>
                <path d="M735 740V560H830L838 580V735L810 745V757H945"/><path d="M835 553H890L880 575V740L850 735V575Z"/><path d="M863 565V730"/>
              </g>
              <g class="jog"><path d="M28-15V800M32-15V800M207-15L38 800 700 720 740 743 862 733M890 743H945"/><path d="M615-15V65L748 68 750-15M615 72H748M722 212H945M725 215L740 405 800 455M728 215L742 405M842 475L893 407 945 411"/></g>
            </g>
            <g transform="translate(410 490) scale(.33333)" clip-path="url(#se)">
              <g class="cut">
                <path d="M930 0L928 360 845 372 780 395 775 400V628"/><path d="M-15 5H60M190 5H318M838 5H930"/><path d="M62 405V240L38 220 42 55 65 65H180L195 53H310L325 75 430 82 437 133 500 140 525 155V275L513 290V395L545 412 550 170 580 130H630L655 110H835"/>
                <path d="M60 75V135L145 143 140 195 122 230V405H-15"/><path d="M65 77H180L200 85H430M195 68H310"/>
                <path d="M140 150H50V200L73 235V410"/><path d="M62 165H130V200L110 225V405"/><path d="M75 180H105L100 200 85 210V405M98 220V405"/>
                <path d="M500-15V75L490 92H450V120L510 125M513-15V80L480 103M525-15V90L510 105M537 15V80L520 110"/>
                <path d="M540 8H620V80L640 105M633-15V75L655 95H835M648-15V72L660 85H835"/><path d="M660-15V78H830L845 55H880V318H845L835 297H660L648 310V385L660 395H722V750"/>
                <path d="M562 410V180L590 142H640"/><path d="M573 410V180L600 155H658L662 130H835L840 230 660 235 645 225"/><path d="M652 120H835L852 135V250"/>
                <path d="M633 460V230M620 478V213H658L662 235M648 255V270M655 245H835M648 260H835M655 270H830M650 285H835"/>
                <path d="M620 478H680L685 585H712L710 410 655 408 635 395"/><path d="M633 465H697V420H650L645 455H685"/><path d="M655 430H690V440H655Z"/>
                <path d="M195 190L197 133H385"/><path d="M208 185V145H310L325 135"/><path d="M220 180V155H295L297 230 320 255H500L513 235V140"/><path d="M232 175L285 168V240L305 265H500"/><path d="M322 145V235H495L500 150"/><path d="M310 147V235L322 245H500"/>
                <path d="M195 190L218 225V405L192 425 195 560 218 570V628H385L380 528"/><path d="M208 185L232 220V410L208 430V550L230 565V617H370L375 575H250"/><path d="M220 180L245 215V400L222 430V545L245 575V603H360M250 590H360"/>
                <path d="M232 178L257 210V400L375 410V425H245L235 440V545"/><path d="M380 478V437H258L255 560 375 565 380 528"/><path d="M305 265L285 290V400"/><path d="M320 270L298 300V402M310 270H500M325 285H500L513 300M310 290V405"/><path d="M500 300V395H495M495 297H322V395H385V425"/>
                <path d="M520 395H437L435 670 420 680H222V740"/><path d="M560 412H447V430H560M570 478L565 440H447V565H565L570 528H630L628 585H590"/><path d="M447 580H575L590 550 615 545V575H580"/>
                <path d="M447 580V670L430 690H235V740"/><path d="M568 720L565 590H460V675L440 703H248V728H710"/><path d="M557 720V603H472V680L440 715H250"/><path d="M220 743H720M580 590V720M590 595V715M600 720H710L715 590 685 585"/>
                <path d="M-15 432H180L195 425M-15 478L145 480V560L122 575V740M-15 495H38V560L62 570V740"/><path d="M50 490H135V550L110 570V735M50 490V545L75 570V740"/><path d="M62 503H122V545L98 570V740M62 505V540L88 565V730"/><path d="M75 518L108 515 110 535 85 545Z"/>
                <path d="M-15 743H60M75 743H215M-15 757H720"/>
                <path d="M775 680L783 718H900L905 590H783L775 628"/><path d="M782 410V580H915M795 420V565H905"/><path d="M808 432V552H908V405H870L850 430 808 432"/><path d="M782 410L840 405 870 385 935 378V793H785V735H920"/><path d="M795 420L850 415 870 397H920V780H797V748H905V767H810M770 803V680"/>
              </g>
              <g class="jog"><path d="M-15 411L60 412M90 407H122L92 545 220 550 370 600 290 405 220 550 128 743M-15 742L85 733"/><path d="M-15 212L85 200 288-15M85 180H105L100 200 80 205Z"/><path d="M317-15L315 70 535 150 530 280 650 395M655 430H688V440H660ZM690 485L600 550 590 585 600 720 710 743 780 790 915 575 855 285 868 65V-15M860 285V65M365 600V585"/></g>
            </g>
          </svg>
          <section class="panel"><form onsubmit="return false">
            <b>input</b>
            <div class="line">file: hello.LCD.44.traces.png</div>
            <div class="line entry gap-1"><label for="dpi">dpi:</label><input type="text" id="dpi" value="1269.7"></div>
            <div class="line">size:</div><div class="line">1638 x 1422 px</div><div class="line">32.767 x 28.446 mm</div><div class="line">1.290 x 1.120 in</div>
            <div class="line entry"><button>invert image</button></div>
            <div class="gap-line"></div>
            <b>output</b>
            <div class="line entry"><label for="cs">cut speed (mm/s):</label><input type="text" id="cs" value="4"></div>
            <div class="line entry"><label for="ps">plunge speed (mm/s):</label><input type="text" id="ps" value="2"></div>
            <div class="line entry"><label for="js">jog speed (mm/s):</label><input type="text" id="js" value="75"></div>
            <div class="line entry"><label for="jh">jog height (mm):</label><input type="text" id="jh" value="5"></div>
            <div class="line entry"><label for="ss">spindle speed (RPM):</label><input type="text" id="ss" value="10000"></div>
            <div class="line entry"><label for="tl">tool:</label><input type="text" id="tl" value="1"></div>
            <div class="line"><label for="con">coolant: on</label><input type="radio" name="cool" id="con" checked><label for="coff">off</label><input type="radio" name="cool" id="coff"></div>
            <div class="gap-line"></div>
            <b>process</b>
            <div class="line entry gap-0"><button>calculate</button><button class="focused ms-1 me-2">save</button><button>send</button></div>
            <div class="line"><label for="sc">send command:</label></div>
            <div class="line inset low"><input type="text" class="wide" id="sc" value="gedit"></div>
            <div class="line"><label for="sv">server:</label></div>
            <div class="line inset low"><input type="text" class="wide" id="sv" value="127.0.0.1:12345"></div>
            <div class="line">direction:</div>
            <div class="line inset entry"><label for="cv">conventional</label><input type="radio" name="dir" id="cv"><label for="cl">climb</label><input type="radio" name="dir" id="cl" checked></div>
            <div class="line"><label for="cd">cut depth (mm):</label></div>
            <div class="line inset low"><input type="text" id="cd" value="0.1"></div>
            <div class="line"><label for="td">tool diameter (mm):</label></div>
            <div class="line inset entry"><input type="text" id="td" value="0.4"></div>
            <div class="line"><label for="no">number of offsets (-1 to fill):</label></div>
            <div class="line inset low"><input type="text" id="no" value="4"></div>
            <div class="line"><label for="oo">offset overlap (%):</label></div>
            <div class="line inset entry"><input type="text" id="oo" value="50"></div>
            <div class="line"><label for="pe">path error (pixels):</label></div>
            <div class="line inset low"><input type="text" id="pe" value="1.1"></div>
            <div class="line"><label for="it">image threshold (0-1):</label></div>
            <div class="line inset entry"><input type="text" id="it" value=".5"></div>
          </form></section>
        </div>
      </div>
      <div class="scroll d-flex flex-column align-items-center">
        <svg width="8" height="6"><path d="M0 5h8L4 1z" fill="#777"/></svg><div class="thumb"></div><div class="rest"></div><svg width="8" height="6"><path d="M0 1h8L4 5z" fill="#555"/></svg>
      </div>
    </main>

    <footer class="downloads d-flex align-items-center">
      <a href="#" class="item d-flex align-items-center"><svg width="16" height="16"><use href="#thumb"/></svg>hello.LCD.44.….png<svg width="10" height="10" class="ms-auto"><use href="#up"/></svg></a>
      <a href="#" class="item d-flex align-items-center"><svg width="16" height="16"><use href="#thumb"/></svg>inventor7.png<svg width="10" height="10" class="ms-auto"><use href="#up"/></svg></a>
      <a href="#" class="item d-flex align-items-center"><svg width="16" height="16"><use href="#thumb"/></svg>inventor6.png<svg width="10" height="10" class="ms-auto"><use href="#up"/></svg></a>
      <a href="#" class="item d-flex align-items-center"><svg width="16" height="16"><use href="#thumb"/></svg>inventor5.png<svg width="10" height="10" class="ms-auto"><use href="#up"/></svg></a>
      <a href="#" class="item d-flex align-items-center"><svg width="16" height="16"><use href="#thumb"/></svg>inventor4.png<svg width="10" height="10" class="ms-auto"><use href="#up"/></svg></a>
      <a href="#" class="item d-flex align-items-center"><svg width="16" height="16"><use href="#thumb"/></svg>inventor3.png<svg width="10" height="10" class="ms-auto"><use href="#up"/></svg></a>
      <a href="#" class="item d-flex align-items-center"><svg width="16" height="16"><use href="#thumb"/></svg>inventor2.png<svg width="10" height="10" class="ms-auto"><use href="#up"/></svg></a>
      <button class="show-all ms-auto">Show all</button>
      <button class="plain ms-3" aria-label="Close downloads"><svg width="11" height="11"><path d="M1 1l9 9M10 1l-9 9" stroke="#9fc4cc" stroke-width="1.500"/></svg></button>
    </footer>
  </div>
</div>
</body>
</html>
